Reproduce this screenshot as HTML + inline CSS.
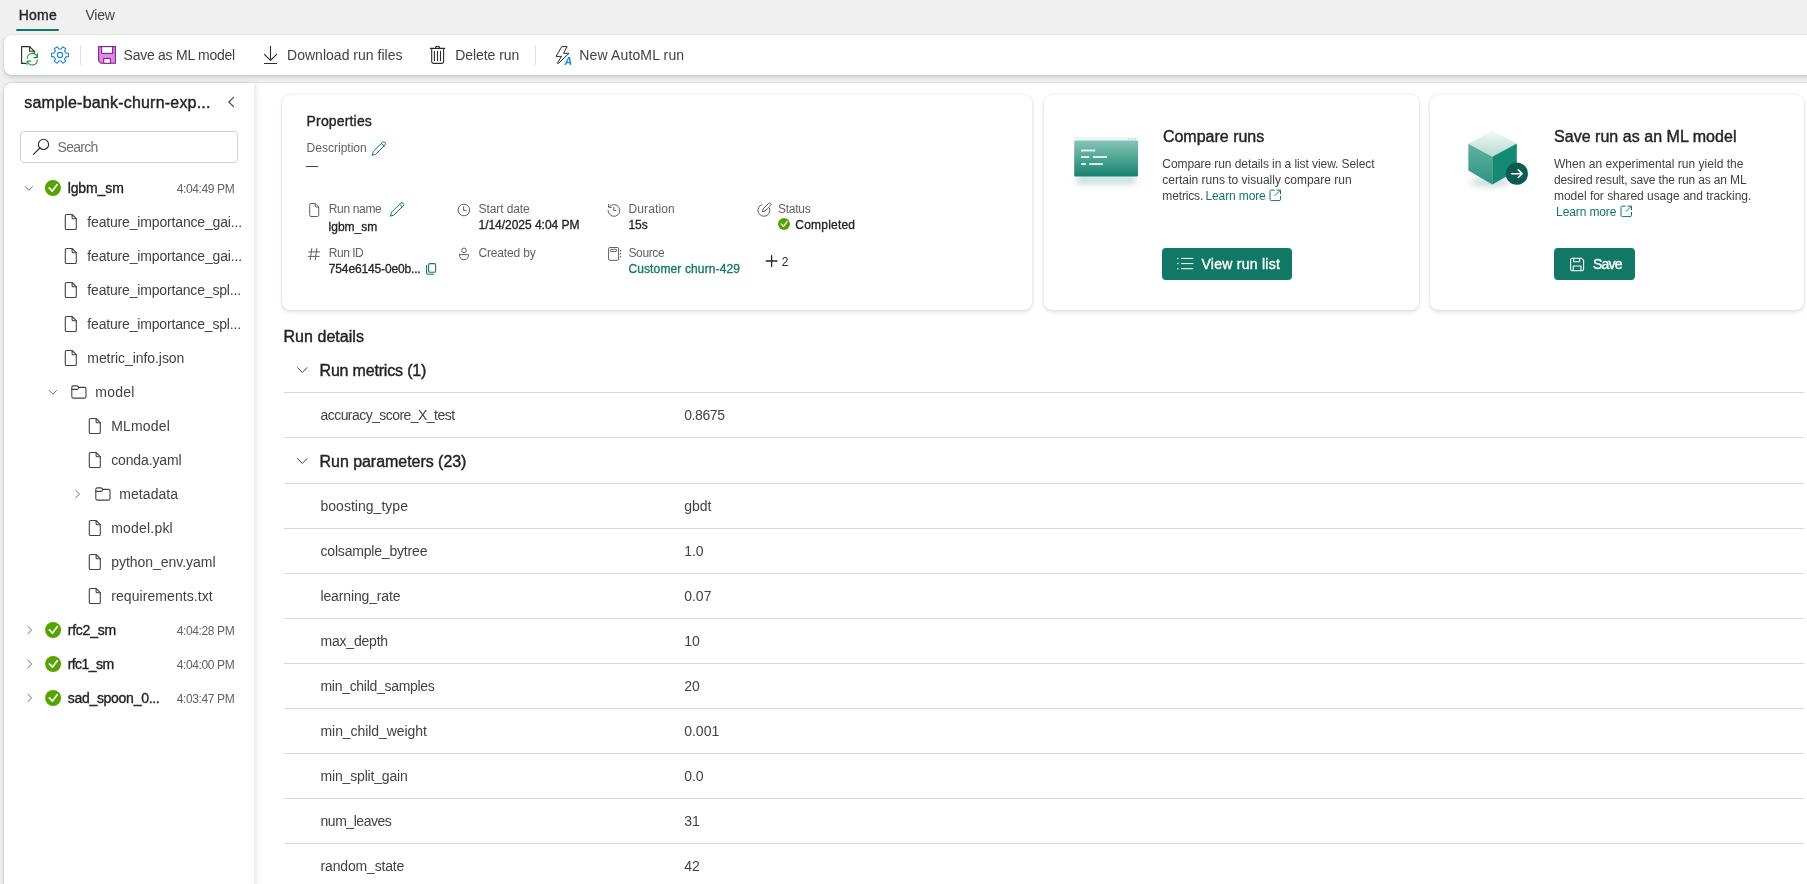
<!DOCTYPE html>
<html><head><meta charset="utf-8"><title>Run</title>
<style>

html,body{margin:0;padding:0;}
body{width:1807px;height:884px;overflow:hidden;position:relative;background:#f0f0f0;font-family:'Liberation Sans',sans-serif;color:#242424;}
.t{position:absolute;white-space:pre;line-height:1;}
.abs{position:absolute;}
.card{position:absolute;background:#fff;border-radius:8px;box-shadow:0 0 2px rgba(0,0,0,0.12),0 2px 4px rgba(0,0,0,0.12);}
.hl{position:absolute;height:1px;background:#d8d8d8;}

</style></head><body>
<div style="position:absolute;left:0;top:0;width:1807px;height:884px;will-change:transform">
<div class="abs" style="left:16px;top:29px;width:43px;height:2px;background:#117865;border-radius:1px"></div>
<div class="abs" style="left:4px;top:35px;width:1820px;height:40px;background:#fff;border-radius:8px;box-shadow:0 0 2px rgba(0,0,0,0.12),0 2px 4px rgba(0,0,0,0.16)"></div>
<div class="abs" style="left:4px;top:83px;width:1820px;height:820px;background:#fff;border-radius:8px 0 0 0;box-shadow:0 0 2px rgba(0,0,0,0.16),0 2px 4px rgba(0,0,0,0.12)"></div>
<div class="abs" style="left:4px;top:83px;width:250px;height:820px;background:#fff;border-radius:8px 0 0 0;box-shadow:0 0 1px rgba(0,0,0,0.10),2px 0 6px rgba(0,0,0,0.11)"></div>
<div class="card" style="left:282px;top:95px;width:750px;height:215px"></div>
<div class="card" style="left:1044px;top:95px;width:375px;height:215px"></div>
<div class="card" style="left:1430px;top:95px;width:374px;height:215px"></div>
<div class="t" style="left:18.7px;top:8.00px;font-size:14px;-webkit-text-stroke:0.36px currentColor;letter-spacing:0.260px;">Home</div>
<div class="t" style="left:85.4px;top:8.00px;font-size:14px;color:#424242;letter-spacing:-0.218px;">View</div>
<div class="t" style="left:123.6px;top:48.00px;font-size:14px;color:#424242;letter-spacing:-0.260px;">Save as ML model</div>
<div class="t" style="left:287.0px;top:48.00px;font-size:14px;color:#424242;letter-spacing:0.022px;">Download run files</div>
<div class="t" style="left:455.2px;top:48.00px;font-size:14px;color:#424242;letter-spacing:-0.050px;">Delete run</div>
<div class="t" style="left:579.3px;top:48.00px;font-size:14px;color:#424242;letter-spacing:0.143px;">New AutoML run</div>
<div class="abs" style="left:80px;top:45px;width:1px;height:20px;background:#e0e0e0"></div>
<div class="abs" style="left:535px;top:45px;width:1px;height:20px;background:#e0e0e0"></div>
<div class="t" style="left:24.3px;top:95.00px;font-size:16px;-webkit-text-stroke:0.41px currentColor;letter-spacing:0.206px;">sample-bank-churn-exp...</div>
<div class="abs" style="left:20px;top:131px;width:216px;height:30px;border:1px solid #d1d1d1;border-radius:4px;background:#fff"></div>
<div class="t" style="left:57.5px;top:140.00px;font-size:14px;color:#707070;letter-spacing:-0.704px;">Search</div>
<div class="t" style="left:67.7px;top:181.00px;font-size:14px;-webkit-text-stroke:0.36px currentColor;letter-spacing:-0.109px;">lgbm_sm</div>
<div class="t" style="left:176.7px;top:183.00px;font-size:12px;color:#616161;letter-spacing:-0.373px;">4:04:49 PM</div>
<div class="t" style="left:87.3px;top:215.00px;font-size:14px;color:#424242;letter-spacing:-0.164px;">feature_importance_gai...</div>
<div class="t" style="left:87.3px;top:249.00px;font-size:14px;color:#424242;letter-spacing:-0.164px;">feature_importance_gai...</div>
<div class="t" style="left:87.3px;top:283.00px;font-size:14px;color:#424242;letter-spacing:-0.173px;">feature_importance_spl...</div>
<div class="t" style="left:87.3px;top:317.00px;font-size:14px;color:#424242;letter-spacing:-0.173px;">feature_importance_spl...</div>
<div class="t" style="left:87.3px;top:351.00px;font-size:14px;color:#424242;letter-spacing:-0.067px;">metric_info.json</div>
<div class="t" style="left:95.3px;top:385.00px;font-size:14px;color:#424242;letter-spacing:0.225px;">model</div>
<div class="t" style="left:111.2px;top:419.00px;font-size:14px;color:#424242;letter-spacing:0.191px;">MLmodel</div>
<div class="t" style="left:111.2px;top:453.00px;font-size:14px;color:#424242;letter-spacing:-0.139px;">conda.yaml</div>
<div class="t" style="left:119.3px;top:487.00px;font-size:14px;color:#424242;letter-spacing:0.052px;">metadata</div>
<div class="t" style="left:111.2px;top:521.00px;font-size:14px;color:#424242;letter-spacing:0.202px;">model.pkl</div>
<div class="t" style="left:111.2px;top:555.00px;font-size:14px;color:#424242;letter-spacing:-0.034px;">python_env.yaml</div>
<div class="t" style="left:111.2px;top:589.00px;font-size:14px;color:#424242;letter-spacing:0.078px;">requirements.txt</div>
<div class="t" style="left:67.7px;top:623.00px;font-size:14px;-webkit-text-stroke:0.36px currentColor;letter-spacing:-0.209px;">rfc2_sm</div>
<div class="t" style="left:176.7px;top:625.00px;font-size:12px;color:#616161;letter-spacing:-0.373px;">4:04:28 PM</div>
<div class="t" style="left:67.7px;top:657.00px;font-size:14px;-webkit-text-stroke:0.36px currentColor;letter-spacing:-0.559px;">rfc1_sm</div>
<div class="t" style="left:176.7px;top:659.00px;font-size:12px;color:#616161;letter-spacing:-0.373px;">4:04:00 PM</div>
<div class="t" style="left:67.7px;top:691.00px;font-size:14px;-webkit-text-stroke:0.36px currentColor;letter-spacing:-0.285px;">sad_spoon_0...</div>
<div class="t" style="left:176.7px;top:693.00px;font-size:12px;color:#616161;letter-spacing:-0.373px;">4:03:47 PM</div>
<div class="t" style="left:306.6px;top:114.00px;font-size:14px;-webkit-text-stroke:0.36px currentColor;letter-spacing:0.159px;">Properties</div>
<div class="t" style="left:306.6px;top:142.00px;font-size:12px;color:#616161;letter-spacing:0.009px;">Description</div>
<div class="abs" style="left:306px;top:166px;width:12px;height:1px;background:#424242"></div>
<div class="t" style="left:328.8px;top:203.00px;font-size:12px;color:#616161;letter-spacing:-0.351px;">Run name</div>
<div class="t" style="left:328.5px;top:221.00px;font-size:12px;-webkit-text-stroke:0.31px currentColor;letter-spacing:0.022px;">lgbm_sm</div>
<div class="t" style="left:328.8px;top:247.00px;font-size:12px;color:#616161;letter-spacing:-0.488px;">Run ID</div>
<div class="t" style="left:328.8px;top:263.00px;font-size:12px;-webkit-text-stroke:0.31px currentColor;letter-spacing:-0.145px;">754e6145-0e0b...</div>
<div class="t" style="left:478.5px;top:203.00px;font-size:12px;color:#616161;letter-spacing:-0.090px;">Start date</div>
<div class="t" style="left:478.5px;top:219.00px;font-size:12px;-webkit-text-stroke:0.31px currentColor;letter-spacing:-0.025px;">1/14/2025 4:04 PM</div>
<div class="t" style="left:478.5px;top:247.00px;font-size:12px;color:#616161;letter-spacing:-0.165px;">Created by</div>
<div class="t" style="left:628.4px;top:203.00px;font-size:12px;color:#616161;letter-spacing:0.137px;">Duration</div>
<div class="t" style="left:628.4px;top:219.00px;font-size:12px;-webkit-text-stroke:0.31px currentColor;">15s</div>
<div class="t" style="left:628.4px;top:247.00px;font-size:12px;color:#616161;letter-spacing:-0.342px;">Source</div>
<div class="t" style="left:628.4px;top:263.00px;font-size:12px;-webkit-text-stroke:0.31px currentColor;color:#117865;letter-spacing:0.131px;">Customer churn-429</div>
<div class="t" style="left:778.0px;top:203.00px;font-size:12px;color:#616161;letter-spacing:-0.262px;">Status</div>
<div class="t" style="left:795.3px;top:219.00px;font-size:12px;-webkit-text-stroke:0.31px currentColor;letter-spacing:0.211px;">Completed</div>
<div class="t" style="left:781.8px;top:256.00px;font-size:12px;">2</div>
<div class="t" style="left:1162.9px;top:129.00px;font-size:16px;-webkit-text-stroke:0.41px currentColor;letter-spacing:-0.001px;">Compare runs</div>
<div class="t" style="left:1162.3px;top:158.00px;font-size:12px;color:#424242;letter-spacing:-0.078px;">Compare run details in a list view. Select</div>
<div class="t" style="left:1162.3px;top:174.00px;font-size:12px;color:#424242;letter-spacing:-0.003px;">certain runs to visually compare run</div>
<div class="t" style="left:1162.3px;top:190.00px;font-size:12px;color:#424242;letter-spacing:-0.140px;">metrics.</div>
<div class="t" style="left:1205.5px;top:190.00px;font-size:12px;color:#117865;letter-spacing:-0.128px;">Learn more</div>
<div class="abs" style="left:1162px;top:248px;width:130px;height:32px;background:#117865;border-radius:4px"></div>
<div class="t" style="left:1201.5px;top:257.00px;font-size:14px;-webkit-text-stroke:0.36px currentColor;color:#fff;letter-spacing:0.260px;">View run list</div>
<div class="t" style="left:1554.0px;top:129.00px;font-size:16px;-webkit-text-stroke:0.41px currentColor;letter-spacing:0.033px;">Save run as an ML model</div>
<div class="t" style="left:1554.0px;top:158.00px;font-size:12px;color:#424242;letter-spacing:0.019px;">When an experimental run yield the</div>
<div class="t" style="left:1554.0px;top:174.00px;font-size:12px;color:#424242;letter-spacing:-0.134px;">desired result, save the run as an ML</div>
<div class="t" style="left:1554.0px;top:190.00px;font-size:12px;color:#424242;letter-spacing:-0.023px;">model for shared usage and tracking.</div>
<div class="t" style="left:1556.1px;top:206.00px;font-size:12px;color:#117865;letter-spacing:-0.117px;">Learn more</div>
<div class="abs" style="left:1554px;top:248px;width:81px;height:32px;background:#117865;border-radius:4px"></div>
<div class="t" style="left:1593.0px;top:257.00px;font-size:14px;-webkit-text-stroke:0.36px currentColor;color:#fff;letter-spacing:-0.794px;">Save</div>
<div class="t" style="left:283.5px;top:329.00px;font-size:16px;-webkit-text-stroke:0.41px currentColor;letter-spacing:0.041px;">Run details</div>
<div class="t" style="left:319.5px;top:363.00px;font-size:16px;-webkit-text-stroke:0.41px currentColor;letter-spacing:-0.179px;">Run metrics (1)</div>
<div class="hl" style="left:284px;top:392px;width:1520px"></div>
<div class="t" style="left:320.5px;top:408.00px;font-size:14px;color:#424242;letter-spacing:-0.550px;">accuracy_score_X_test</div>
<div class="t" style="left:684.2px;top:408.00px;font-size:14px;color:#424242;letter-spacing:-0.418px;">0.8675</div>
<div class="hl" style="left:284px;top:437px;width:1520px"></div>
<div class="t" style="left:319.5px;top:454.00px;font-size:16px;-webkit-text-stroke:0.41px currentColor;letter-spacing:-0.037px;">Run parameters (23)</div>
<div class="hl" style="left:284px;top:483px;width:1520px"></div>
<div class="t" style="left:320.5px;top:499.00px;font-size:14px;color:#424242;letter-spacing:0.021px;">boosting_type</div>
<div class="t" style="left:684.2px;top:499.00px;font-size:14px;color:#424242;">gbdt</div>
<div class="hl" style="left:284px;top:528px;width:1520px"></div>
<div class="t" style="left:320.5px;top:544.00px;font-size:14px;color:#424242;letter-spacing:-0.186px;">colsample_bytree</div>
<div class="t" style="left:684.2px;top:544.00px;font-size:14px;color:#424242;">1.0</div>
<div class="hl" style="left:284px;top:573px;width:1520px"></div>
<div class="t" style="left:320.5px;top:589.00px;font-size:14px;color:#424242;letter-spacing:-0.141px;">learning_rate</div>
<div class="t" style="left:684.2px;top:589.00px;font-size:14px;color:#424242;">0.07</div>
<div class="hl" style="left:284px;top:618px;width:1520px"></div>
<div class="t" style="left:320.5px;top:634.00px;font-size:14px;color:#424242;letter-spacing:-0.205px;">max_depth</div>
<div class="t" style="left:684.2px;top:634.00px;font-size:14px;color:#424242;">10</div>
<div class="hl" style="left:284px;top:663px;width:1520px"></div>
<div class="t" style="left:320.5px;top:679.00px;font-size:14px;color:#424242;letter-spacing:-0.295px;">min_child_samples</div>
<div class="t" style="left:684.2px;top:679.00px;font-size:14px;color:#424242;">20</div>
<div class="hl" style="left:284px;top:708px;width:1520px"></div>
<div class="t" style="left:320.5px;top:724.00px;font-size:14px;color:#424242;letter-spacing:-0.071px;">min_child_weight</div>
<div class="t" style="left:684.2px;top:724.00px;font-size:14px;color:#424242;">0.001</div>
<div class="hl" style="left:284px;top:753px;width:1520px"></div>
<div class="t" style="left:320.5px;top:769.00px;font-size:14px;color:#424242;letter-spacing:-0.166px;">min_split_gain</div>
<div class="t" style="left:684.2px;top:769.00px;font-size:14px;color:#424242;">0.0</div>
<div class="hl" style="left:284px;top:798px;width:1520px"></div>
<div class="t" style="left:320.5px;top:814.00px;font-size:14px;color:#424242;letter-spacing:-0.462px;">num_leaves</div>
<div class="t" style="left:684.2px;top:814.00px;font-size:14px;color:#424242;">31</div>
<div class="hl" style="left:284px;top:843px;width:1520px"></div>
<div class="t" style="left:320.5px;top:859.00px;font-size:14px;color:#424242;letter-spacing:-0.161px;">random_state</div>
<div class="t" style="left:684.2px;top:859.00px;font-size:14px;color:#424242;">42</div>
<svg style="position:absolute;left:0;top:0" width="1807" height="884" viewBox="0 0 1807 884" fill="none"><path d="M25.9 63.4 H21.6 V46.6 H29.6 L34.2 51.2 V53.5" stroke="#2b2b2b" stroke-width="1.1" fill="none" stroke-linecap="round" stroke-linejoin="round" /><path d="M29.6 46.6 V51.2 H34.2" stroke="#2b2b2b" stroke-width="1.1" fill="none" stroke-linecap="round" stroke-linejoin="round" /><path d="M27.3 58.3 A5 5 0 0 1 37.1 57" stroke="#1c9a3a" stroke-width="1.1" fill="none" stroke-linecap="round" stroke-linejoin="round" /><path d="M37.4 53.9 V57.6 H33.9" stroke="#1c9a3a" stroke-width="1.1" fill="none" stroke-linecap="round" stroke-linejoin="round" /><path d="M37.4 60.2 A5 5 0 0 1 27.7 61.6" stroke="#1c9a3a" stroke-width="1.1" fill="none" stroke-linecap="round" stroke-linejoin="round" /><path d="M27.1 64.6 V61.1 H30.8" stroke="#1c9a3a" stroke-width="1.1" fill="none" stroke-linecap="round" stroke-linejoin="round" /><path d="M68.41 53.21 L68.41 56.79 L65.90 56.92 L64.61 59.15 L65.75 61.39 L62.66 63.18 L61.29 61.06 L58.71 61.06 L57.34 63.18 L54.25 61.39 L55.39 59.15 L54.10 56.92 L51.59 56.79 L51.59 53.21 L54.10 53.08 L55.39 50.85 L54.25 48.61 L57.34 46.82 L58.71 48.94 L61.29 48.94 L62.66 46.82 L65.75 48.61 L64.61 50.85 L65.90 53.08Z" stroke="#1f7fd0" stroke-width="1.1" fill="none" stroke-linecap="round" stroke-linejoin="round" /><circle cx="60" cy="55" r="2.6" stroke="#1f7fd0" stroke-width="1.1" fill="none" /><path d="M98.6 46.6 H115.4 V63.3 H101.2 L98.6 60.8 Z" stroke="#8e1c98" stroke-width="1.1" fill="#d68fdc" stroke-linecap="round" stroke-linejoin="round" /><rect x="101.6" y="46.6" width="11" height="6.8" rx="0" stroke="#8e1c98" stroke-width="1.1" fill="#fff" /><rect x="103.7" y="58.5" width="6.7" height="4.8" rx="0" stroke="#8e1c98" stroke-width="1.1" fill="#fff" /><path d="M270.5 46.3 V60.3 M264.4 54.3 L270.5 60.3 L276.6 54.3 M264.4 63.5 H276.6" stroke="#2b2b2b" stroke-width="1.1" fill="none" stroke-linecap="round" stroke-linejoin="round" /><path d="M430.3 48.4 H444.8 M431.7 48.6 V61.8 Q431.7 63.4 433.3 63.4 H442 Q443.6 63.4 443.6 61.8 V48.6 M435.3 48.3 Q435.5 46.3 437.6 46.3 Q439.7 46.3 439.9 48.3 M434.4 51.2 V60.4 M437.5 51.2 V60.4 M440.5 51.2 V60.4" stroke="#2b2b2b" stroke-width="1.1" fill="none" stroke-linecap="round" stroke-linejoin="round" /><path d="M562.2 46.6 H567.1 L563.6 53.3 H569 L558.6 63.3 H557.4 L561.4 56.4 H556.4 Z" stroke="#2b2b2b" stroke-width="1.0" fill="none" stroke-linecap="round" stroke-linejoin="round" /><text x="564.4" y="64.6" font-family="Liberation Sans" font-weight="700" font-style="italic" font-size="10.5" fill="#1f86d3">A</text><path d="M233.6 97.3 L228.8 102 L233.6 106.7" stroke="#424242" stroke-width="1.1" fill="none" stroke-linecap="round" stroke-linejoin="round" /><circle cx="43.5" cy="144.4" r="5.1" stroke="#2b2b2b" stroke-width="1.1" fill="none" /><path d="M39.9 148 L33.5 154.4" stroke="#2b2b2b" stroke-width="1.1" fill="none" stroke-linecap="round" stroke-linejoin="round" /><path d="M25.299999999999997 186.6 L28.9 190.3 L32.5 186.6" stroke="#6b6b6b" stroke-width="1.0" fill="none" stroke-linecap="round" stroke-linejoin="round" /><circle cx="52.9" cy="188" r="8" stroke="none" stroke-width="1" fill="#57a300" /><path d="M49.20 187.80 L52.30 191.10 L57.00 184.70" stroke="#fff" stroke-width="1.7" fill="none" stroke-linecap="round" stroke-linejoin="round" /><path d="M65.3 215.8 Q65.3 214.5 66.6 214.5 H72.1 L76.3 218.7 V228.2 Q76.3 229.5 75.0 229.5 H66.6 Q65.3 229.5 65.3 228.2 Z" stroke="#424242" stroke-width="1.1" fill="none" stroke-linecap="round" stroke-linejoin="round" /><path d="M72.1 214.5 V217.7 Q72.1 218.7 73.1 218.7 H76.3" stroke="#424242" stroke-width="1.1" fill="none" stroke-linecap="round" stroke-linejoin="round" /><path d="M65.3 249.8 Q65.3 248.5 66.6 248.5 H72.1 L76.3 252.7 V262.2 Q76.3 263.5 75.0 263.5 H66.6 Q65.3 263.5 65.3 262.2 Z" stroke="#424242" stroke-width="1.1" fill="none" stroke-linecap="round" stroke-linejoin="round" /><path d="M72.1 248.5 V251.7 Q72.1 252.7 73.1 252.7 H76.3" stroke="#424242" stroke-width="1.1" fill="none" stroke-linecap="round" stroke-linejoin="round" /><path d="M65.3 283.8 Q65.3 282.5 66.6 282.5 H72.1 L76.3 286.7 V296.2 Q76.3 297.5 75.0 297.5 H66.6 Q65.3 297.5 65.3 296.2 Z" stroke="#424242" stroke-width="1.1" fill="none" stroke-linecap="round" stroke-linejoin="round" /><path d="M72.1 282.5 V285.7 Q72.1 286.7 73.1 286.7 H76.3" stroke="#424242" stroke-width="1.1" fill="none" stroke-linecap="round" stroke-linejoin="round" /><path d="M65.3 317.8 Q65.3 316.5 66.6 316.5 H72.1 L76.3 320.7 V330.2 Q76.3 331.5 75.0 331.5 H66.6 Q65.3 331.5 65.3 330.2 Z" stroke="#424242" stroke-width="1.1" fill="none" stroke-linecap="round" stroke-linejoin="round" /><path d="M72.1 316.5 V319.7 Q72.1 320.7 73.1 320.7 H76.3" stroke="#424242" stroke-width="1.1" fill="none" stroke-linecap="round" stroke-linejoin="round" /><path d="M65.3 351.8 Q65.3 350.5 66.6 350.5 H72.1 L76.3 354.7 V364.2 Q76.3 365.5 75.0 365.5 H66.6 Q65.3 365.5 65.3 364.2 Z" stroke="#424242" stroke-width="1.1" fill="none" stroke-linecap="round" stroke-linejoin="round" /><path d="M72.1 350.5 V353.7 Q72.1 354.7 73.1 354.7 H76.3" stroke="#424242" stroke-width="1.1" fill="none" stroke-linecap="round" stroke-linejoin="round" /><path d="M49.3 390.5 L52.9 394.2 L56.5 390.5" stroke="#6b6b6b" stroke-width="1.0" fill="none" stroke-linecap="round" stroke-linejoin="round" /><path d="M71.8 387.4 Q71.8 385.9 73.3 385.9 H76.89999999999999 Q77.6 385.9 78.1 386.59999999999997 L78.6 387.4 H84.5 Q86.0 387.4 86.0 388.9 V396.59999999999997 Q86.0 398.09999999999997 84.5 398.09999999999997 H73.3 Q71.8 398.09999999999997 71.8 396.59999999999997 Z" stroke="#424242" stroke-width="1.1" fill="none" stroke-linecap="round" stroke-linejoin="round" /><path d="M71.8 389.4 H76.89999999999999 Q77.6 389.4 78.1 388.7 L78.6 387.4" stroke="#424242" stroke-width="1.1" fill="none" stroke-linecap="round" stroke-linejoin="round" /><path d="M89.3 419.8 Q89.3 418.5 90.6 418.5 H96.1 L100.3 422.7 V432.2 Q100.3 433.5 99.0 433.5 H90.6 Q89.3 433.5 89.3 432.2 Z" stroke="#424242" stroke-width="1.1" fill="none" stroke-linecap="round" stroke-linejoin="round" /><path d="M96.1 418.5 V421.7 Q96.1 422.7 97.1 422.7 H100.3" stroke="#424242" stroke-width="1.1" fill="none" stroke-linecap="round" stroke-linejoin="round" /><path d="M89.3 453.8 Q89.3 452.5 90.6 452.5 H96.1 L100.3 456.7 V466.2 Q100.3 467.5 99.0 467.5 H90.6 Q89.3 467.5 89.3 466.2 Z" stroke="#424242" stroke-width="1.1" fill="none" stroke-linecap="round" stroke-linejoin="round" /><path d="M96.1 452.5 V455.7 Q96.1 456.7 97.1 456.7 H100.3" stroke="#424242" stroke-width="1.1" fill="none" stroke-linecap="round" stroke-linejoin="round" /><path d="M75.69999999999999 490.3 L79.5 494 L75.69999999999999 497.7" stroke="#6b6b6b" stroke-width="1.0" fill="none" stroke-linecap="round" stroke-linejoin="round" /><path d="M95.8 489.4 Q95.8 487.9 97.3 487.9 H100.89999999999999 Q101.6 487.9 102.1 488.59999999999997 L102.6 489.4 H108.5 Q110.0 489.4 110.0 490.9 V498.59999999999997 Q110.0 500.09999999999997 108.5 500.09999999999997 H97.3 Q95.8 500.09999999999997 95.8 498.59999999999997 Z" stroke="#424242" stroke-width="1.1" fill="none" stroke-linecap="round" stroke-linejoin="round" /><path d="M95.8 491.4 H100.89999999999999 Q101.6 491.4 102.1 490.7 L102.6 489.4" stroke="#424242" stroke-width="1.1" fill="none" stroke-linecap="round" stroke-linejoin="round" /><path d="M89.3 521.8 Q89.3 520.5 90.6 520.5 H96.1 L100.3 524.7 V534.2 Q100.3 535.5 99.0 535.5 H90.6 Q89.3 535.5 89.3 534.2 Z" stroke="#424242" stroke-width="1.1" fill="none" stroke-linecap="round" stroke-linejoin="round" /><path d="M96.1 520.5 V523.7 Q96.1 524.7 97.1 524.7 H100.3" stroke="#424242" stroke-width="1.1" fill="none" stroke-linecap="round" stroke-linejoin="round" /><path d="M89.3 555.8 Q89.3 554.5 90.6 554.5 H96.1 L100.3 558.7 V568.2 Q100.3 569.5 99.0 569.5 H90.6 Q89.3 569.5 89.3 568.2 Z" stroke="#424242" stroke-width="1.1" fill="none" stroke-linecap="round" stroke-linejoin="round" /><path d="M96.1 554.5 V557.7 Q96.1 558.7 97.1 558.7 H100.3" stroke="#424242" stroke-width="1.1" fill="none" stroke-linecap="round" stroke-linejoin="round" /><path d="M89.3 589.8 Q89.3 588.5 90.6 588.5 H96.1 L100.3 592.7 V602.2 Q100.3 603.5 99.0 603.5 H90.6 Q89.3 603.5 89.3 602.2 Z" stroke="#424242" stroke-width="1.1" fill="none" stroke-linecap="round" stroke-linejoin="round" /><path d="M96.1 588.5 V591.7 Q96.1 592.7 97.1 592.7 H100.3" stroke="#424242" stroke-width="1.1" fill="none" stroke-linecap="round" stroke-linejoin="round" /><path d="M27.900000000000002 626.3 L31.7 630 L27.900000000000002 633.7" stroke="#6b6b6b" stroke-width="1.0" fill="none" stroke-linecap="round" stroke-linejoin="round" /><circle cx="53.1" cy="630" r="8" stroke="none" stroke-width="1" fill="#57a300" /><path d="M49.40 629.80 L52.50 633.10 L57.20 626.70" stroke="#fff" stroke-width="1.7" fill="none" stroke-linecap="round" stroke-linejoin="round" /><path d="M27.900000000000002 660.3 L31.7 664 L27.900000000000002 667.7" stroke="#6b6b6b" stroke-width="1.0" fill="none" stroke-linecap="round" stroke-linejoin="round" /><circle cx="53.1" cy="664" r="8" stroke="none" stroke-width="1" fill="#57a300" /><path d="M49.40 663.80 L52.50 667.10 L57.20 660.70" stroke="#fff" stroke-width="1.7" fill="none" stroke-linecap="round" stroke-linejoin="round" /><path d="M27.900000000000002 694.3 L31.7 698 L27.900000000000002 701.7" stroke="#6b6b6b" stroke-width="1.0" fill="none" stroke-linecap="round" stroke-linejoin="round" /><circle cx="53.1" cy="698" r="8" stroke="none" stroke-width="1" fill="#57a300" /><path d="M49.40 697.80 L52.50 701.10 L57.20 694.70" stroke="#fff" stroke-width="1.7" fill="none" stroke-linecap="round" stroke-linejoin="round" /><path d="M372.2 155.0 L373.4 151.4 L382.5 142.3 Q383.8 141.4 384.9 142.5 Q386.0 143.6 385.09999999999997 144.9 L376.0 154.0 Z" stroke="#117865" stroke-width="1.0" fill="none" stroke-linecap="round" stroke-linejoin="round" /><path d="M381.4 143.4 L384.0 146.0" stroke="#117865" stroke-width="1.0" fill="none" stroke-linecap="round" stroke-linejoin="round" /><path d="M390.4 215.8 L391.59999999999997 212.20000000000002 L400.7 203.10000000000002 Q402.0 202.20000000000002 403.09999999999997 203.3 Q404.2 204.4 403.29999999999995 205.70000000000002 L394.2 214.8 Z" stroke="#117865" stroke-width="1.0" fill="none" stroke-linecap="round" stroke-linejoin="round" /><path d="M399.59999999999997 204.20000000000002 L402.2 206.8" stroke="#117865" stroke-width="1.0" fill="none" stroke-linecap="round" stroke-linejoin="round" /><path d="M309.7 204.8 Q309.7 203.5 311.0 203.5 H315.2 L318.7 207.0 V215.2 Q318.7 216.5 317.4 216.5 H311.0 Q309.7 216.5 309.7 215.2 Z" stroke="#616161" stroke-width="1.0" fill="none" stroke-linecap="round" stroke-linejoin="round" /><path d="M315.2 203.5 V206.0 Q315.2 207.0 316.2 207.0 H318.7" stroke="#616161" stroke-width="1.0" fill="none" stroke-linecap="round" stroke-linejoin="round" /><path d="M311.8 248.5 L310.2 259.8 M316.8 248.5 L315.2 259.8 M308.6 251.9 H319.6 M308.2 256.4 H319.2" stroke="#616161" stroke-width="1.0" fill="none" stroke-linecap="round" stroke-linejoin="round" /><path d="M428.6 264.9 Q428.6 263.6 429.9 263.6 H434.3 Q435.6 263.6 435.6 264.9 V270.9 Q435.6 272.2 434.3 272.2 H429.9 Q428.6 272.2 428.6 270.9 Z" stroke="#117865" stroke-width="1.1" fill="none" stroke-linecap="round" stroke-linejoin="round" /><path d="M426.6 265.4 V272.7 Q426.6 274.3 428.2 274.3 H433.6" stroke="#117865" stroke-width="1.1" fill="none" stroke-linecap="round" stroke-linejoin="round" /><circle cx="463.9" cy="210" r="5.8" stroke="#616161" stroke-width="1.0" fill="none" /><path d="M463.6 206.8 V210.4 H466.2" stroke="#616161" stroke-width="1.0" fill="none" stroke-linecap="round" stroke-linejoin="round" /><circle cx="464" cy="250.3" r="2.3" stroke="#616161" stroke-width="1.0" fill="none" /><path d="M459.6 254.6 H468.4 Q468.6 259.8 464 259.8 Q459.4 259.8 459.6 254.6 Z" stroke="#616161" stroke-width="1.0" fill="none" stroke-linecap="round" stroke-linejoin="round" /><path d="M609.5 206.5 A5.9 5.9 0 1 1 608 210.5" stroke="#616161" stroke-width="1.0" fill="none" stroke-linecap="round" stroke-linejoin="round" /><path d="M608.6 204.3 V207.3 H611.5" stroke="#616161" stroke-width="1.0" fill="none" stroke-linecap="round" stroke-linejoin="round" /><path d="M613.8 207.4 V210.5 H616" stroke="#616161" stroke-width="1.0" fill="none" stroke-linecap="round" stroke-linejoin="round" /><rect x="608.6" y="247.5" width="10" height="12.8" rx="1.3" stroke="#616161" stroke-width="1.0" fill="none" /><rect x="610.6" y="249.3" width="6" height="2.2" rx="0.6" stroke="#616161" stroke-width="0.9" fill="none" /><path d="M620.6 250.4 V251 M620.6 253.4 V254 M620.6 256.4 V257" stroke="#616161" stroke-width="1.1" fill="none" stroke-linecap="round" stroke-linejoin="round" /><path d="M769.6 208.3 A6 6 0 1 1 761.9 204.6" stroke="#616161" stroke-width="1.0" fill="none" stroke-linecap="round" stroke-linejoin="round" /><path d="M762.4 211.3 L763.2 208.8 L768.4 203.6 Q769.6 202.6 770.6 203.6 Q771.5 204.6 770.5 205.7 L765.3 210.8 Z" stroke="#616161" stroke-width="1.0" fill="none" stroke-linecap="round" stroke-linejoin="round" /><circle cx="784" cy="224" r="6" stroke="none" stroke-width="1" fill="#57a300" /><path d="M781.23 223.85 L783.55 226.32 L787.08 221.53" stroke="#fff" stroke-width="1.275" fill="none" stroke-linecap="round" stroke-linejoin="round" /><path d="M771.6 255.6 V266.4 M766.2 261 H777" stroke="#242424" stroke-width="1.3" fill="none" stroke-linecap="round" stroke-linejoin="round" /><defs>
<linearGradient id="gc" x1="0" y1="0" x2="0" y2="1"><stop offset="0" stop-color="#86c4b6"/><stop offset="1" stop-color="#15836f"/></linearGradient>
<linearGradient id="gtop" x1="0" y1="0" x2="0" y2="1"><stop offset="0" stop-color="#f4faf8"/><stop offset="1" stop-color="#b5d9d1"/></linearGradient>
<linearGradient id="gleft" x1="0" y1="0" x2="0" y2="1"><stop offset="0" stop-color="#62b1a2"/><stop offset="1" stop-color="#2f927f"/></linearGradient>
<filter id="blur3" x="-100%" y="-200%" width="300%" height="500%"><feGaussianBlur stdDeviation="3"/></filter>
<filter id="blur2" x="-100%" y="-200%" width="300%" height="500%"><feGaussianBlur stdDeviation="2"/></filter>
</defs><rect x="1076" y="176" width="60" height="8" rx="3" stroke="none" stroke-width="1" fill="#9cc7bd" filter="url(#blur3)" opacity="0.6"/><rect x="1074.2" y="137" width="63.8" height="4" rx="0" stroke="none" stroke-width="1" fill="#eef6f4" /><rect x="1074.2" y="140.6" width="63.8" height="36" rx="1.5" stroke="none" stroke-width="1" fill="url(#gc)" /><rect x="1081" y="149.5" width="14.2" height="2" rx="0" stroke="none" stroke-width="1" fill="#fff" opacity="0.8"/><rect x="1081" y="156" width="8.3" height="2" rx="0" stroke="none" stroke-width="1" fill="#fff" opacity="0.8"/><rect x="1093" y="156" width="14" height="2" rx="0" stroke="none" stroke-width="1" fill="#fff" opacity="0.8"/><rect x="1081" y="163" width="5" height="2" rx="0" stroke="none" stroke-width="1" fill="#fff" opacity="0.8"/><rect x="1089.2" y="163" width="13.7" height="2" rx="0" stroke="none" stroke-width="1" fill="#fff" opacity="0.8"/><rect x="1128.5" y="138.2" width="1.2" height="1.2" rx="0" stroke="none" stroke-width="1" fill="#9fd0c5" /><rect x="1131.5" y="138.2" width="1.2" height="1.2" rx="0" stroke="none" stroke-width="1" fill="#9fd0c5" /><rect x="1134.5" y="138.2" width="1.2" height="1.2" rx="0" stroke="none" stroke-width="1" fill="#9fd0c5" /><ellipse cx="1490" cy="182" rx="20" ry="5" fill="#8fb8b0" opacity="0.45" filter="url(#blur3)"/><path d="M1492.3 130.4 L1516.8 143.4 L1492.3 156.8 L1468.3 143.7 Z" stroke="none" stroke-width="0" fill="url(#gtop)" stroke-linecap="round" stroke-linejoin="round" /><path d="M1468.3 143.7 L1492.3 156.8 V184.4 L1468.3 170.6 Z" stroke="none" stroke-width="0" fill="url(#gleft)" stroke-linecap="round" stroke-linejoin="round" /><path d="M1516.8 143.4 L1492.3 156.8 V184.4 L1516.8 170.6 Z" stroke="none" stroke-width="0" fill="#148a74" stroke-linecap="round" stroke-linejoin="round" /><circle cx="1516.8" cy="173.7" r="11.1" stroke="none" stroke-width="1" fill="#0b5c50" /><path d="M1511.5 173.7 H1522 M1518.3 169.9 L1522.1 173.7 L1518.3 177.5" stroke="#fff" stroke-width="1.6" fill="none" stroke-linecap="round" stroke-linejoin="round" /><circle cx="1177.9" cy="258.4" r="0.75" stroke="none" stroke-width="1" fill="#ffffff" /><path d="M1181.4 258.4 H1193" stroke="#ffffff" stroke-width="1.0" fill="none" stroke-linecap="round" stroke-linejoin="round" /><circle cx="1177.9" cy="263.6" r="0.75" stroke="none" stroke-width="1" fill="#ffffff" /><path d="M1181.4 263.6 H1193" stroke="#ffffff" stroke-width="1.0" fill="none" stroke-linecap="round" stroke-linejoin="round" /><circle cx="1177.9" cy="268.7" r="0.75" stroke="none" stroke-width="1" fill="#ffffff" /><path d="M1181.4 268.7 H1193" stroke="#ffffff" stroke-width="1.0" fill="none" stroke-linecap="round" stroke-linejoin="round" /><path d="M1570.6 259.8 Q1570.6 258.2 1572.2 258.2 H1581.4 L1583.6 260.4 V269.2 Q1583.6 270.8 1582 270.8 H1572.2 Q1570.6 270.8 1570.6 269.2 Z" stroke="#ffffff" stroke-width="1.1" fill="none" stroke-linecap="round" stroke-linejoin="round" /><path d="M1573.6 258.4 V261.8 H1579.6 V258.4 M1573.2 270.6 V266 H1581 V270.6" stroke="#ffffff" stroke-width="1.1" fill="none" stroke-linecap="round" stroke-linejoin="round" /><path d="M1274.3 190.1 H1271.4 Q1270.0 190.1 1270.0 191.5 V199.2 Q1270.0 200.6 1271.4 200.6 H1279.1 Q1280.5 200.6 1280.5 199.2 V196.29999999999998" stroke="#117865" stroke-width="1.0" fill="none" stroke-linecap="round" stroke-linejoin="round" /><path d="M1276.8 190.1 H1280.5 V193.79999999999998 M1280.5 190.1 L1275.1 195.5" stroke="#117865" stroke-width="1.0" fill="none" stroke-linecap="round" stroke-linejoin="round" /><path d="M1625.3 206.1 H1622.4 Q1621.0 206.1 1621.0 207.5 V215.2 Q1621.0 216.6 1622.4 216.6 H1630.1 Q1631.5 216.6 1631.5 215.2 V212.29999999999998" stroke="#117865" stroke-width="1.0" fill="none" stroke-linecap="round" stroke-linejoin="round" /><path d="M1627.8 206.1 H1631.5 V209.79999999999998 M1631.5 206.1 L1626.1 211.5" stroke="#117865" stroke-width="1.0" fill="none" stroke-linecap="round" stroke-linejoin="round" /><path d="M297.6 367.6 L302.3 372.5 L307 367.6" stroke="#424242" stroke-width="1.0" fill="none" stroke-linecap="round" stroke-linejoin="round" /><path d="M297.6 458.6 L302.3 463.5 L307 458.6" stroke="#424242" stroke-width="1.0" fill="none" stroke-linecap="round" stroke-linejoin="round" /></svg>
</div>
</body></html>
